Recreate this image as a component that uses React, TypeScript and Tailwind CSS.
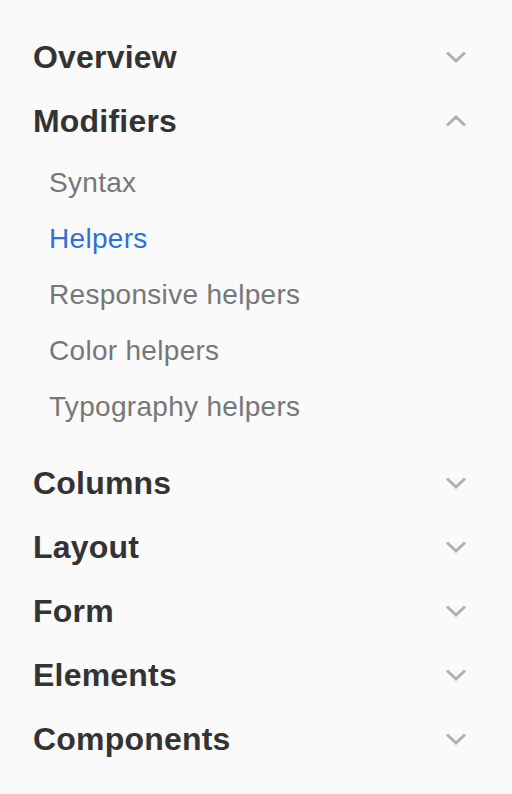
const SECTIONS = [
  { title: 'Overview', open: false },
  { title: 'Modifiers', open: true, items: ['Syntax', 'Helpers', 'Responsive helpers', 'Color helpers', 'Typography helpers'], active: 'Helpers' },
  { title: 'Columns', open: false },
  { title: 'Layout', open: false },
  { title: 'Form', open: false },
  { title: 'Elements', open: false },
  { title: 'Components', open: false },
];

function Chevron({ up }: { up?: boolean }) {
  return (
    <svg width="22" height="12" viewBox="0 0 22 12" className="text-[#b0b0b0]">
      <polyline
        points={up ? '2,10.5 11,2 20,10.5' : '2,1.5 11,10 20,1.5'}
        fill="none"
        stroke="currentColor"
        strokeWidth="3"
      />
    </svg>
  );
}

export default function App() {
  return (
    <div className="min-h-[794px] w-[512px] bg-[#fafafa] pt-[25px] font-['Liberation_Sans',Arial,sans-serif]">
      {SECTIONS.map((s) => (
        <div key={s.title}>
          <div className="flex h-16 items-center justify-between pl-[33px] pr-[45px]">
            <span className="text-[32px] font-bold tracking-[0.2px] text-[#333333]">{s.title}</span>
            <Chevron up={s.open} />
          </div>
          {s.items && (
            <ul className="mb-4 mt-[2px]">
              {s.items.map((it) => (
                <li
                  key={it}
                  className={`flex h-14 items-center pl-[49px] text-[28px] tracking-[0.3px] ${it === s.active ? 'text-[#2f6fdc]' : 'text-[#777777]'}`}
                >
                  {it}
                </li>
              ))}
            </ul>
          )}
        </div>
      ))}
    </div>
  );
}
